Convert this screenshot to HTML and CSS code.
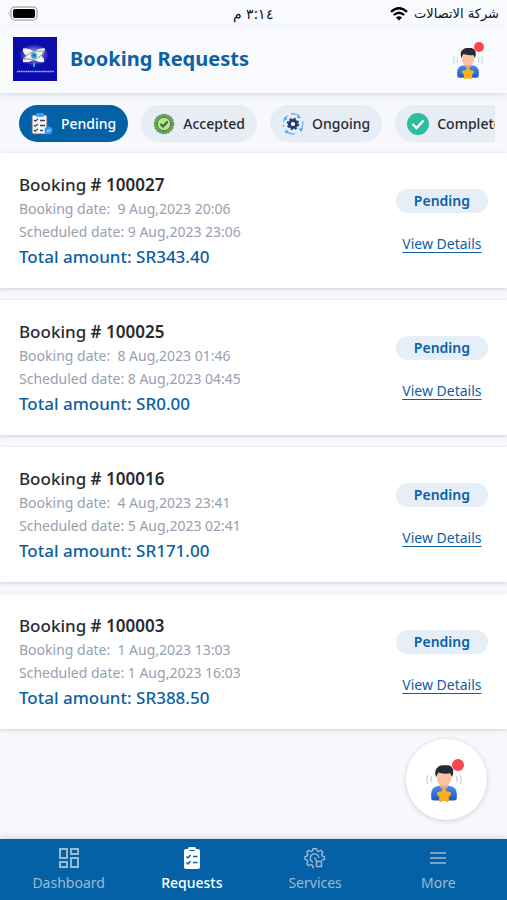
FILE: index.html
```html
<!DOCTYPE html>
<html lang="en">
<head>
<meta charset="utf-8">
<meta name="viewport" content="width=device-width, initial-scale=1">
<title>Booking Requests</title>
<link rel="stylesheet" href="styles.css">
</head>
<body>
<svg class="defs" aria-hidden="true">
  <linearGradient id="shirt" x1="0" y1="0" x2="0" y2="1"><stop offset="0" stop-color="#4a8cec"/><stop offset="1" stop-color="#1d5bc4"/></linearGradient>
  <linearGradient id="gold" x1="0" y1="0" x2="0" y2="1"><stop offset="0" stop-color="#ffc52e"/><stop offset="1" stop-color="#f59a0c"/></linearGradient>
  <radialGradient id="glow"><stop offset="0" stop-color="#fff" stop-opacity=".8"/><stop offset="1" stop-color="#fff" stop-opacity="0"/></radialGradient>
  <symbol id="agent" viewBox="0 0 40 46">
    <path d="M3 18q-2 4 0 9M7 19q-1.500 3.500 0 7M33 19q1.500 3.500 0 7M37 18q2 4 0 9" fill="none" stroke="#c9cdd1" stroke-width="1.200"/>
    <path d="M6.500 42v-4q0-8 8-9h11q8 1 8 9v4q0 2.500-3 2.500H9.500q-3 0-3-2.500z" fill="url(#shirt)"/>
    <path d="M15.500 25h9v5q-4.500 5-9 0z" fill="#f0a68b"/>
    <rect x="12.500" y="11" width="15" height="18" rx="7" fill="#fbc3a5"/>
    <path d="M11.500 20q-2-8 2-10.500 2-2.500 6-2h5q4 1 5 4.500 1 4-1 8l-2-4q-6 1-12.500-1z" fill="#252a33"/>
    <path d="M20 33l2 3.300 4.200.9-2.800 3.200.4 4.300-3.800-1.600-3.800 1.600.4-4.300-2.800-3.200 4.200-.9z" fill="url(#gold)" stroke="#fbaf1b" stroke-width="3" stroke-linejoin="round"/>
  </symbol>
</svg>

<div class="status" dir="ltr">
  <svg class="battery" viewBox="0 0 30 16" role="img" aria-label="Battery full"><rect x="3" y="1" width="26" height="13" rx="4" fill="#fff" stroke="#aeb0b4" stroke-width="1.500"/><rect x="5" y="3" width="22" height="9" rx="2" fill="#000"/><path d="M1.500 5q-2 2.500 0 5z" fill="#aeb0b4"/></svg>
  <span class="time" dir="rtl" lang="ar">٣:١٤ م</span>
  <span class="carrier">
    <svg class="wifi" viewBox="0 0 18 14" role="img" aria-label="Wi-Fi"><path d="M1 4.800q8-7 16 0M3.800 8q5.200-4.500 10.400 0" fill="none" stroke="#000" stroke-width="2.300"/><path d="M9 13.500l-3-3q3-2.500 6 0z"/></svg>
    <span dir="rtl" lang="ar">شركة الاتصالات</span>
  </span>
</div>

<header class="header">
  <svg class="logo" viewBox="0 0 44 44" role="img" aria-label="Star Service Provider"><rect width="44" height="44" fill="#0a0cab"/><ellipse cx="21" cy="18" rx="15" ry="11" fill="url(#glow)"/><path d="M10 11.500q5-1 11 3 6-4 11-3 0 4-4 7 4 3.500 3 6.500-5 1-10-2.500-6 3.500-11 2.500-1-3 3.500-6.500-4.500-3-3.500-7z" fill="#f4f6f6"/><path d="M11 22q4-9 20-8-3 10-20 8z" fill="#eef2f2" stroke="#7e8a8f" stroke-width=".9"/><circle cx="21" cy="18.500" r="3" fill="#35a4da"/><circle cx="21" cy="18.500" r="1" fill="#10418c"/><path d="M21 26v4" stroke="#2d9fe4" stroke-width="2"/><path d="M4 34.500h37" stroke="#a9afe6" stroke-width="1.400" stroke-dasharray="1.400 .4"/></svg>
  <h1 class="title">Booking Requests</h1>
  <button class="agent-button" type="button" aria-label="Requests for me"><svg class="agent-small"><use href="#agent"/></svg><i class="dot dot-small"></i></button>
</header>

<nav class="tabs" aria-label="Booking status">
  <button class="tab tab-active" type="button">
    <svg class="tab-icon" viewBox="0 0 22 22"><rect x="1" y="2" width="15" height="19" rx="1.500" fill="#f5f7fa" stroke="#596572"/><rect x="5" y="0" width="8" height="4" rx="1.500" fill="#459eee"/><path d="M3 7l1.200 1.200L7 6M3 12l1.200 1.200L7 11M3 17l1.200 1.200L7 16M9 7.500h5M9 12.500h5M9 17.500h3" fill="none" stroke="#3c4653" stroke-width="1.300"/><circle cx="17.500" cy="17.500" r="4" fill="#2997f5"/><path d="M15.700 17.500l1.300 1.300 2.400-2.600" fill="none" stroke="#fff"/></svg>Pending</button>
  <button class="tab" type="button">
    <svg class="tab-icon" viewBox="0 0 22 22"><circle cx="11" cy="11" r="9.500" fill="#68a95b" stroke="#578e58" stroke-width="1.500" stroke-dasharray="2 1"/><circle cx="11" cy="11" r="6.800" fill="#b4e383" stroke="#49764c"/><path d="M7.500 11l2.500 2.500 4.700-5" fill="none" stroke="#3c6143" stroke-width="2"/></svg>Accepted</button>
  <button class="tab" type="button">
    <svg class="tab-icon" viewBox="0 0 22 22"><g fill="none" stroke="#69b8fa" stroke-width="1.300"><path d="M1.500 9q1-4.500 4.800-6.500M9 1q5-1 8.500 2.200M20.500 8q1.200 5-1.700 8.500M13 20.700q-5.500 1-9-3M1.300 14v-2"/></g><path d="M16 1.500l3 3.500-4 .3zM21 15l-1.500 4-3-3zM6 20.500l-4-1.500 3-2.500zM1 6l3.500-3 .5 4z" fill="#4ba6f4"/><circle cx="11" cy="11" r="3.600" fill="#fff" stroke="#293b72" stroke-width="3"/><circle cx="11" cy="11" r="5.400" fill="none" stroke="#293b72" stroke-width="1.600" stroke-dasharray="2.200 2.040"/></svg>Ongoing</button>
  <button class="tab" type="button">
    <svg class="tab-icon" viewBox="0 0 22 22"><circle cx="11" cy="11" r="11" fill="#2fbda0"/><path d="M5.500 11l4 4 7-7.500" fill="none" stroke="#fff" stroke-width="2.300"/></svg>Completed</button>
</nav>

<main class="list">
  <article class="card">
    <div class="info"><h2 class="number">Booking <b># 100027</b></h2><p class="date">Booking date:&nbsp; 9 Aug,2023 20:06</p><p class="date">Scheduled date: 9 Aug,2023 23:06</p><p class="total">Total amount: SR343.40</p></div>
    <div class="side"><span class="badge">Pending</span><a class="details" href="#100027">View Details</a></div>
  </article>
  <article class="card">
    <div class="info"><h2 class="number">Booking <b># 100025</b></h2><p class="date">Booking date:&nbsp; 8 Aug,2023 01:46</p><p class="date">Scheduled date: 8 Aug,2023 04:45</p><p class="total">Total amount: SR0.00</p></div>
    <div class="side"><span class="badge">Pending</span><a class="details" href="#100025">View Details</a></div>
  </article>
  <article class="card">
    <div class="info"><h2 class="number">Booking <b># 100016</b></h2><p class="date">Booking date:&nbsp; 4 Aug,2023 23:41</p><p class="date">Scheduled date: 5 Aug,2023 02:41</p><p class="total">Total amount: SR171.00</p></div>
    <div class="side"><span class="badge">Pending</span><a class="details" href="#100016">View Details</a></div>
  </article>
  <article class="card">
    <div class="info"><h2 class="number">Booking <b># 100003</b></h2><p class="date">Booking date:&nbsp; 1 Aug,2023 13:03</p><p class="date">Scheduled date: 1 Aug,2023 16:03</p><p class="total">Total amount: SR388.50</p></div>
    <div class="side"><span class="badge">Pending</span><a class="details" href="#100003">View Details</a></div>
  </article>
</main>

<div class="bottom">
  <button class="fab" type="button" aria-label="Support agent"><svg class="agent-large"><use href="#agent"/></svg><i class="dot dot-large"></i></button>
  <nav class="navbar" aria-label="Main">
    <a class="nav-item" href="#dashboard"><svg class="nav-icon" viewBox="1 1 22 22" fill="none" stroke="currentColor" stroke-width="2"><path d="M3 3h7v9H3zM14 3h7v5h-7zM14 12h7v9h-7zM3 16h7v5H3z"/></svg>Dashboard</a>
    <a class="nav-item nav-active" href="#requests" aria-current="page"><svg class="nav-icon" viewBox="0 0 22 22"><rect x="3" y="2" width="16" height="20" rx="2" fill="currentColor"/><rect x="7" y="0" width="8" height="5" rx="1.500" fill="currentColor"/><path d="M8.500 3.500h5" stroke="#0461a5"/><path d="M5.500 9.500l1.500 1.500 2.500-3M5.500 15.500l1.500 1.500 2.500-3M12 9.500h4.500M12 15.500h4.500" fill="none" stroke="#0461a5" stroke-width="1.500"/></svg>Requests</a>
    <a class="nav-item" href="#services"><svg class="nav-icon" viewBox="0 0 22 22" fill="none" stroke="currentColor" stroke-width="1.400" stroke-linejoin="round"><path d="M10 19.500H9l-.6-2.300-1.600-.7-2.100 1.200-2-2 1.200-2.100-.7-1.600-2.200-.6V8.600L3.200 8l.7-1.600-1.200-2.100 2-2 2.100 1.200 1.600-.7L9 .8h3.500l.6 2 1.600.7 2.100-1.200 2 2-1.200 2.100.7 1.600 2.200.6v2.800l-2.200.6v.5" transform="translate(0 1)"/><path d="M9 15a4.200 4.200 0 1 1 5.700-4M12.500 14.500h5v5h-5zM10.500 10.500l2.500 4"/></svg>Services</a>
    <a class="nav-item" href="#more"><svg class="nav-icon" viewBox="0 0 22 22" fill="none" stroke="currentColor" stroke-width="1.500"><path d="M3 6h16M3 11h16M3 16h16"/></svg>More</a>
  </nav>
</div>
</body>
</html>
```
FILE: styles.css
```css
* { box-sizing: border-box; }

body {
  display: flex;
  flex-direction: column;
  min-height: 100vh;
  margin: 0;
  background: #f6f8fc;
  color: #292b2f;
  font-family: "Noto Sans", "Open Sans", sans-serif;
}

h1, h2, p { margin: 0; }
button { border: 0; padding: 0; font: inherit; color: inherit; cursor: pointer; }
svg { flex: none; }
.defs { position: absolute; width: 0; height: 0; }

.status {
  display: grid;
  grid-template-columns: 1fr auto 1fr;
  align-items: center;
  height: 28px;
  padding: 0 8px;
  background: #f8fafe;
  color: #111;
  font-size: 14px;
  line-height: 20px;
}
.battery { width: 30px; height: 16px; }
.carrier { display: flex; justify-content: flex-end; align-items: center; gap: 6px; font-family: "DejaVu Sans", sans-serif; font-size: 13px; }
.wifi { width: 18px; height: 14px; }

.header {
  position: relative;
  display: flex;
  align-items: center;
  height: 65px;
  padding: 0 20px 4px 13px;
  background: #f8fafe;
  box-shadow: 0 2px 6px rgba(40, 65, 90, .13);
}
.logo { width: 44px; height: 44px; }
.title { flex: 1; margin-left: 13px; color: #0c60a4; font-size: 20px; line-height: 28px; }
.agent-button { position: relative; display: flex; justify-content: center; align-items: flex-end; width: 38px; height: 40px; background: none; }
.agent-small { width: 32px; height: 37px; }
.dot { position: absolute; border-radius: 50%; background: #fb4650; }
.dot-small { top: 3px; right: 3px; width: 10px; height: 10px; }

.tabs {
  display: flex;
  gap: 13px;
  margin-right: 12px;
  padding: 12px 0 11px 19px;
  overflow: hidden;
}
.tab {
  display: flex;
  flex: none;
  align-items: center;
  gap: 8px;
  height: 37px;
  padding: 0 12px;
  border-radius: 19px;
  background: #e7edf5;
  font-size: 14px;
  font-weight: 500;
  white-space: nowrap;
}
.tab-active { background: #0461a5; color: #fff; }
.tab-icon { width: 22px; height: 22px; }

.list { display: flex; flex-direction: column; gap: 12px; }
.card {
  display: flex;
  justify-content: space-between;
  padding: 20px 19px 17px;
  background: #fff;
  box-shadow: 0 1px 4px rgba(30, 45, 70, .2);
}
.number { font-size: 17px; font-weight: 500; line-height: 24px; }
.number b { font-weight: 600; }
.date { color: #98a0b0; font-size: 14px; line-height: 23px; }
.total { color: #0c60a4; font-size: 17px; font-weight: 500; line-height: 28px; }
.side { display: flex; flex-direction: column; align-items: center; gap: 20px; padding-top: 16px; }
.badge {
  padding: 0 18px;
  border-radius: 12px;
  background: #e6eff7;
  color: #0c60a4;
  font-size: 14px;
  font-weight: 600;
  line-height: 24px;
}
.details { color: #0c60a4; font-size: 14px; line-height: 22px; text-underline-offset: 3px; }

.bottom { position: sticky; bottom: 0; margin-top: auto; }
.fab {
  position: absolute;
  right: 20px;
  bottom: 80px;
  display: flex;
  justify-content: center;
  align-items: center;
  width: 81px;
  height: 81px;
  padding: 0 5px 0 0;
  border-radius: 50%;
  background: #fff;
  box-shadow: 0 1px 5px rgba(30, 45, 70, .2);
}
.agent-large { width: 38px; height: 44px; }
.dot-large { top: 20px; right: 23px; width: 12px; height: 12px; }

.navbar {
  display: grid;
  grid-template-columns: repeat(4, 1fr);
  padding: 8px 7px 7px;
  background: #0461a5;
  box-shadow: 0 -2px 6px rgba(40, 65, 90, .15);
}
.nav-item {
  display: flex;
  flex-direction: column;
  align-items: center;
  gap: 4px;
  color: #9cb9cf;
  font-size: 14px;
  line-height: 20px;
  text-decoration: none;
}
.nav-active { color: #fff; font-weight: 500; }
.nav-icon { width: 22px; height: 22px; }
```
